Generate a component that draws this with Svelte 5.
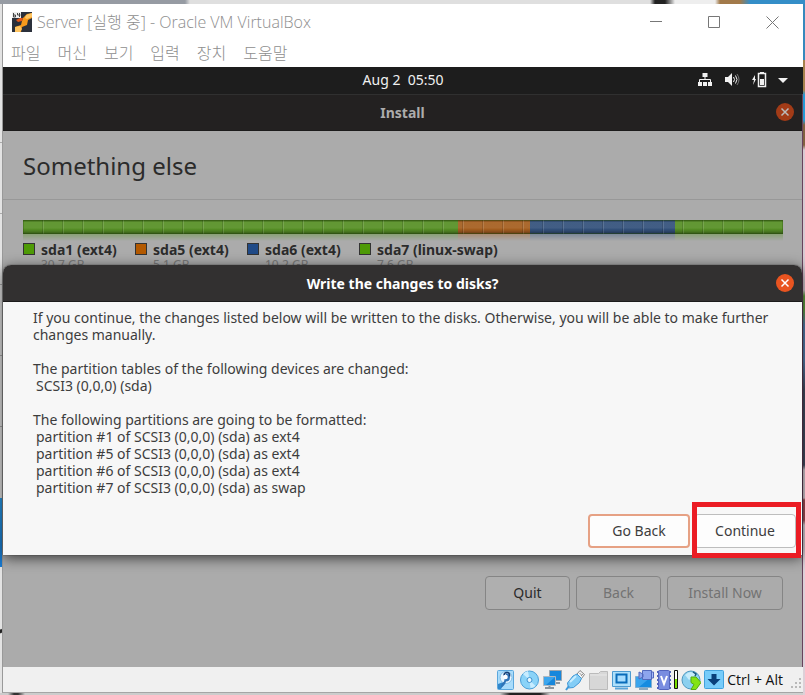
<script>
  const menus = ['파일', '머신', '보기', '입력', '장치', '도움말'];
  const parts = [
    { name: 'sda1 (ext4)', size: '30.7 GB', color: '#4e9a06', fill: '#579026', share: 435 },
    { name: 'sda5 (ext4)', size: '5.1 GB', color: '#b35900', fill: '#a55f20', share: 72 },
    { name: 'sda6 (ext4)', size: '10.2 GB', color: '#204a87', fill: '#34527c', share: 145 },
    { name: 'sda7 (linux-swap)', size: '7.6 GB', color: '#4e9a06', fill: '#579026', share: 108 }
  ];
  const formatted = ['#1 of SCSI3 (0,0,0) (sda) as ext4', '#5 of SCSI3 (0,0,0) (sda) as ext4', '#6 of SCSI3 (0,0,0) (sda) as ext4', '#7 of SCSI3 (0,0,0) (sda) as swap'];
</script>

<div class="desktop">
  <main class="window">
    <header class="titlebar">
      <svg class="logo" width="20" height="20" viewBox="0 0 20 20" aria-hidden="true">
        <rect width="20" height="20" fill="#2b303b" />
        <path d="M11 6l4-4 5-1v5l-4 2-1 5-5 2-1 5H3v-5l6-2 1-4z" fill="#f79a1c" />
        <path d="M14 3l6-2v4l-5 2-2-1z" fill="#ffc562" />
        <path d="M4 8l4-2 3 0-1 3-4 1z" fill="#e4571a" />
        <path d="M3 15l5-1 2 3-2 3H3z" fill="#ffc562" />
        <rect width="9" height="6" fill="#eee" />
        <path d="M1.500 1v4h2V3h-2M7.500 1v4M5.500 1v2h3" fill="none" stroke="#444" />
      </svg>
      <h1>Server [실행 중] - Oracle VM VirtualBox</h1>
      <div class="controls">
        <button aria-label="Minimize"><svg width="13" height="13"><path d="M0 5.500H12" /></svg></button>
        <button aria-label="Maximize"><svg width="13" height="13"><path d="M.5 .5h11v11H.5z" /></svg></button>
        <button aria-label="Close"><svg width="13" height="13"><path d="M.5 .5l12 12M12.500 .5l-12 12" /></svg></button>
      </div>
    </header>
    <nav>
      {#each menus as m}<button>{m}</button>{/each}
    </nav>

    <div class="topbar">
      <time>Aug 2&nbsp; 05:50</time>
      <div class="tray">
        <svg width="16" height="16" viewBox="0 0 16 16"><path d="M5.500 1h5v4h-5zM1 10h4v4H1zM6 10h4v4H6zM11 10h4v4h-4z" fill="#f2f2f2" /><path d="M8 5v3M2.500 11V7.500h11V11" fill="none" stroke="#f2f2f2" /></svg>
        <svg width="16" height="16" viewBox="0 0 16 16"><path d="M1 5h3l4-4v13l-4-4H1z" fill="#f2f2f2" /><path d="M9.500 5q2 2.500 0 5M11.500 3.500q3 4 0 8" fill="none" stroke="#f2f2f2" /><path d="M13 2q4 5.500 0 11" fill="none" stroke="#777" /></svg>
        <svg width="16" height="16" viewBox="0 0 16 16"><path d="M4 3L1 8h2l-1 5 3-6H4z" fill="#f2f2f2" /><path d="M7.500 1.500h7v13h-7z" fill="none" stroke="#f2f2f2" stroke-width="1.500" /><path d="M9 0h4v2H9zM9 7h4v6H9z" fill="#f2f2f2" /></svg>
        <svg width="10" height="16" viewBox="0 0 10 16"><path d="M0 6h10l-5 5z" fill="#f2f2f2" /></svg>
      </div>
    </div>

    <section class="installer">
      <header class="bar dim">
        <h2>Install</h2>
        <button class="close" aria-label="Close installer"><svg width="18" height="18"><path d="M5.500 5.500l7 7M12.500 5.500l-7 7" /></svg></button>
      </header>
      <h3>Something else</h3>
      <div class="content">
        <div class="disk">
          {#each parts as p}<span style="flex-grow:{p.share};background-color:{p.fill}"></span>{/each}
        </div>
        <div class="reflection">
          {#each parts as p}<span style="flex-grow:{p.share};background-color:{p.fill}"></span>{/each}
        </div>
        <ul class="legend">
          {#each parts as p}
            <li><i style="background:{p.color}"></i><div><b>{p.name}</b><small>{p.size}</small></div></li>
          {/each}
        </ul>
      </div>
      <footer>
        <button>Quit</button>
        <button disabled>Back</button>
        <button class="wide" disabled>Install Now</button>
      </footer>

      <div class="dialog" role="dialog" aria-labelledby="ask">
        <header class="bar">
          <h2 id="ask">Write the changes to disks?</h2>
          <button class="close" aria-label="Close dialog"><svg width="18" height="18"><path d="M5.500 5.500l7 7M12.500 5.500l-7 7" /></svg></button>
        </header>
        <div class="message">
          <p>If you continue, the changes listed below will be written to the disks. Otherwise, you will be able to make further<br />changes manually.</p>
          <p>The partition tables of the following devices are changed:<br /><span class="sub">SCSI3 (0,0,0) (sda)</span></p>
          <p>The following partitions are going to be formatted:{#each formatted as f}<br /><span class="sub">partition {f}</span>{/each}</p>
        </div>
        <div class="actions">
          <button class="focus">Go Back</button>
          <div class="marked"><button>Continue</button></div>
        </div>
      </div>
    </section>

    <div class="status">
      <svg width="20" height="22" viewBox="0 0 20 22"><rect x="1.500" y="1.500" width="16" height="19" rx="1" fill="#a9dcfb" stroke="#5aa7dd" /><path d="M2 15l8-3-5 8H2z" fill="#2f87cc" /><circle cx="10" cy="8.500" r="6" fill="#e8f6ff" stroke="#7fbce6" /><path d="M10 4.500a4 4 0 1 1 0 8q-1 4-5 6 0-4 3-6" fill="#2f74b8" /><path d="M8 6.500q0-3 3-3t2.500 4" fill="none" stroke="#153e75" stroke-width="1.500" /><circle cx="9.500" cy="8" r="2.300" fill="#fff" /></svg>
      <svg width="20" height="22" viewBox="0 0 20 22"><circle cx="10.500" cy="11" r="9" fill="#8bd3f8" stroke="#4a9fd8" /><path d="M10.500 11L4 5a9 9 0 0 1 5-3zM10.500 11l6 6a9 9 0 0 1-5 2z" fill="#c8ecff" /><circle cx="10.500" cy="11" r="2.500" fill="#e9f8ff" stroke="#3d91cf" /></svg>
      <svg width="20" height="22" viewBox="0 0 20 22"><path d="M7.500 1.500h12v10h-12z" fill="#1687dc" stroke="#9ba5ad" /><path d="M11 14h7" stroke="#8b969f" stroke-width="2" /><path d="M1.500 7.500h12v9h-12z" fill="#1687dc" stroke="#b1b9c0" /><path d="M2 8h11l-9 8H2z" fill="#3ca6ee" /><path d="M3 19h9M7.500 17v2" stroke="#8b969f" stroke-width="2" /></svg>
      <svg width="20" height="22" viewBox="0 0 20 22"><path d="M12 5l3-3.500 4.500 4-3 4z" fill="#f5f5f5" stroke="#888" /><path d="M15 4.500l1 1M16.500 6.500l1-1" stroke="#333" /><path d="M8 7l4-2 4.500 4.500-2 4-6 5-5 .5-1-5z" fill="#83cdf6" stroke="#4197d5" /><path d="M4 17l-3 4" stroke="#3f99d8" stroke-width="2" /><path d="M5 13l6-6" stroke="#c9eeff" stroke-width="2" /></svg>
      <svg width="20" height="22" viewBox="0 0 20 22"><path d="M1.500 20.500v-16h9l2-2h7v18z" fill="#d7d7d7" stroke="#bbb" /><path d="M2 6h17" stroke="#e8e8e8" /></svg>
      <svg width="20" height="22" viewBox="0 0 20 22"><path d="M1.500 2.500h18v15h-18z" fill="#aee0fb" stroke="#4c9bd1" /><path d="M5.500 5.500h10v8h-10z" fill="#a6ddff" stroke="#096cba" stroke-width="2" /><path d="M4 19.500h13" stroke="#5aa5d8" stroke-width="2" /></svg>
      <svg width="20" height="22" viewBox="0 0 20 22"><path d="M1.500 7.500h16v11h-16z" fill="#168ce0" stroke="#82afd0" /><path d="M2 8h15L5 18H2z" fill="#3aa5ed" /><path d="M8.500 1.500h9v9h-9zM5 3l4 2v3l-4 2z" fill="#8da5ed" stroke="#5269bd" /><path d="M17.500 3h2v6h-2z" fill="#a8bcfa" stroke="#5269bd" /><path d="M5 20h9" stroke="#8caac0" stroke-width="2" /></svg>
      <svg width="14" height="22" viewBox="1 0 14 22"><rect x="2.500" y="1.500" width="11" height="19" rx="1" fill="#798de0" stroke="#5264bd" /><path d="M2 2v18M14 2v18" stroke="#5264bd" stroke-width="2" stroke-dasharray="2 2" /><path d="M5 7l3 8 3-8" fill="none" stroke="#fff" stroke-width="2" /></svg>
      <svg width="4" height="22" viewBox="0 0 4 22"><path d="M.5 1.500h3v18h-3z" fill="#fff" stroke="#111" /><path d="M1 10h2v9H1z" fill="#7add00" /></svg>
      <svg width="20" height="22" viewBox="0 0 20 22"><circle cx="10" cy="11" r="9" fill="#8cd0ef" stroke="#4f98c0" /><path d="M4 6q6-6 11 0l-7 5z" fill="#c7ecfb" /><path d="M10 8h5l5 5.500-5 7h-5l3-5-3-2z" fill="#83e314" stroke="#52ab13" /><path d="M12 3l3 2-1 2" fill="none" stroke="#19587d" stroke-width="1.500" /></svg>
      <svg width="20" height="22" viewBox="0 0 20 22"><rect x=".5" y="1.500" width="19" height="18" rx="1" fill="#77ccfa" stroke="#43a2dc" /><path d="M7.500 5h5v5h4L10 16.500 3.500 10h4z" fill="#083f7a" /></svg>
      <span>Ctrl + Alt</span>
      <svg class="grip" width="12" height="22" viewBox="0 0 12 22"><path d="M9 9h2v2H9zM5 13h2v2H5zM9 13h2v2H9zM1 17h2v2H1zM5 17h2v2H5zM9 17h2v2H9z" fill="#b9b9b9" /></svg>
    </div>
  </main>
</div>

<style>
  :global(body) { margin: 0; }
  * { box-sizing: border-box; }
  button { font: inherit; color: inherit; border: 0; background: none; padding: 0; margin: 0; }
  h1, h2, h3, p, ul { margin: 0; padding: 0; font-weight: 400; }
  svg { display: block; flex: none; }
  .desktop {
    min-height: 100vh; display: flex; padding: 4px 2px 2px;
    background:
      linear-gradient(#299be9, #1778d0) 0 498px / 3px 69px no-repeat,
      linear-gradient(165deg, transparent 30%, #222 40% 60%, transparent 70%) 0 625px / 3px 12px no-repeat,
      linear-gradient(#aaa, #aaa) 0 142px / 3px 1px no-repeat,
      linear-gradient(#aaa, #aaa) 0 213px / 3px 1px no-repeat,
      linear-gradient(#aaa, #aaa) 0 284px / 3px 1px no-repeat,
      linear-gradient(#aaa, #aaa) 0 355px / 3px 1px no-repeat,
      linear-gradient(#aaa, #aaa) 0 426px / 3px 1px no-repeat,
      linear-gradient(90deg, #969ba3 0 185px, #dfdfdf 190px 650px, #222 655px 665px, #eee 675px 715px, #a27a4a 720px 740px, #348ec8 750px 100%) 0 0 / 100% 4px no-repeat,
      linear-gradient(#3689bd 0 60px, #a5814c 60px 90px, #279bd6 95px 120px, #80613f 125px 145px, #d8cad2 150px 290px, #639d42 296px 310px, #557dac 325px 360px, #444b60 390px 465px, #dacdd5 470px 498px, #a84c56 500px 520px, #ddd0d8 525px) 100% 0 / 2px 100% no-repeat,
      linear-gradient(90deg, #ccc 0 8px, #333 14px 18px, #ccc 25px 500px, #222 510px 540px, #d0d0d0 550px) 0 100% / 100% 2px no-repeat,
      #e3e3e3;
  }
  .window { flex: 1; min-width: 0; display: flex; flex-direction: column; border-left: 1px solid #999; border-bottom: 1px solid #a5a5a5; background: #fff; }
  .titlebar { display: flex; align-items: center; height: 36px; padding-left: 9px; color: #8e8e8e; }
  h1 { flex: 1; margin-left: 5px; font: 300 16px/20px "Open Sans", "Noto Sans CJK KR", sans-serif; white-space: nowrap; }
  .controls { display: flex; padding-right: 2px; }
  .controls button { width: 58px; height: 36px; display: grid; place-items: center; }
  .controls svg { fill: none; stroke: #777; }
  nav { display: flex; gap: 17px; height: 27px; padding-left: 8px; color: #8e8e8e; font: 300 16px/27px "Open Sans", "Noto Sans CJK KR", sans-serif; }
  .topbar { display: grid; grid-template-columns: 1fr auto 1fr; align-items: center; height: 27px; padding-bottom: 1px; background: #1d1d1d; color: #f0f0f0; font: 14px/20px "Noto Sans", sans-serif; }
  time { grid-column: 2; }
  .tray { display: flex; justify-content: flex-end; gap: 11px; padding-right: 15px; }
  .installer { position: relative; flex: 1; display: flex; flex-direction: column; background: #ababab; border-right: 1px solid #68425c; color: #2b2b2b; font: 14px/17px "Noto Sans", sans-serif; }
  .bar { display: grid; grid-template-columns: 1fr auto 1fr; align-items: center; height: 37px; padding: 0 8px; background: #323030; border-bottom: 1px solid #1c1b1b; color: #fff; }
  .bar h2 { grid-column: 2; font-size: 14px; font-weight: 700; }
  .close { justify-self: end; width: 18px; height: 18px; border-radius: 50%; background: #e95420; }
  .close svg { stroke: #fff; stroke-width: 1.500; }
  .dim { padding-bottom: 1px; background: #232121; border-top: 1px solid #303030; color: #acacac; }
  .dim .close { background: #a23b17; }
  .dim .close svg { stroke: #bbb; }
  h3 { height: 69px; padding-left: 20px; border-bottom: 1px solid #989898; font-size: 24px; line-height: 69px; }
  .content { padding: 20px 19px 0 20px; }
  .disk, .reflection { display: flex; }
  .disk { height: 14px; position: relative; }
  .disk span {
    background-image: linear-gradient(#0004 0 1px, #fff1 2px 8px, #0000 9px, #0003 12px, #0007 14px);
  }
  .disk::after { content: ""; position: absolute; inset: 0; border: 1px solid #2e560c60; background: repeating-linear-gradient(90deg, #0000 0 18px, #0002 18px 19px, #fff2 19px 20px); }
  .reflection { height: 7px; opacity: .4; mask-image: linear-gradient(#000, transparent); }
  .legend { display: grid; grid-template-columns: repeat(3, 112px) 1fr; list-style: none; }
  .legend li { display: flex; gap: 6px; white-space: nowrap; }
  .legend i { width: 12px; height: 12px; margin-top: 2px; border: 1px solid #333; }
  .legend b { display: block; font-weight: 700; }
  .legend small { display: block; font-size: 12px; line-height: 14px; color: #777; }
  footer { display: flex; justify-content: flex-end; gap: 6px; margin-top: auto; padding: 0 19px 57px; }
  footer button { width: 85px; height: 34px; padding-bottom: 2px; border: 1px solid #858585; border-radius: 4px; background: #afafaf; }
  footer .wide { width: 116px; }
  footer button:disabled { color: #737373; background: #ababab; }
  .dialog { position: absolute; top: 171px; left: 0; right: 0; background: #f7f7f7; border-radius: 8px 8px 0 0; box-shadow: 0 3px 14px #000a, 0 0 1px #000; color: #3d3d3d; }
  .dialog .bar { border-radius: 8px 8px 0 0; }
  .message { padding: 7px 0 0 30px; }
  .message p { margin-bottom: 17px; white-space: nowrap; }
  .sub { margin-left: 3px; }
  .actions { display: flex; justify-content: flex-end; gap: 4px; padding: 1px 6px 7px; }
  .actions button { width: 102px; height: 34px; padding-bottom: 2px; border: 1px solid #bdbdbd; border-radius: 4px; background: #fdfdfd; }
  .actions .focus { border: 2px solid #e6a184; }
  .marked { position: relative; }
  .marked::after { content: ""; position: absolute; inset: -12px -5px -10px -2px; border: 5px solid #eb1c24; pointer-events: none; }
  .status { display: flex; align-items: center; justify-content: flex-end; gap: 3px; height: 25px; padding-right: 1px; background: #f0f0f0; color: #111; font: 14px/20px "Open Sans", sans-serif; }
  .grip { margin-left: 4px; }
</style>
